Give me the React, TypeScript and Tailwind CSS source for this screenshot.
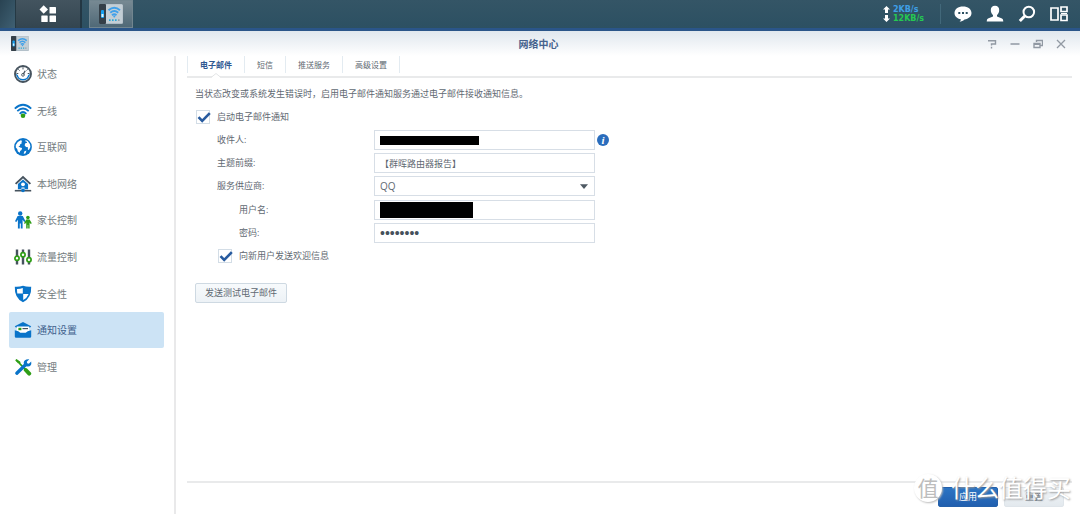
import React, { useState } from 'react';

const BLUE = '#0a74c9';
const GREEN = '#2f9e16';
const DARK = '#46535e';

function Svg({ children, className = 'h-[18px] w-[18px]', box = '0 0 18 18' }: { children: React.ReactNode; className?: string; box?: string }) {
  return (
    <svg viewBox={box} className={className + ' shrink-0'} fill="none" aria-hidden="true">
      {children}
    </svg>
  );
}

function RouterIcon({ className }: { className: string }) {
  return (
    <svg viewBox="0 0 24 20" className={className} fill="none" aria-hidden="true">
      <rect x="0" y="0" width="24" height="20" rx="1.5" fill="#aebbc4" />
      <rect x="7" y="0.5" width="16.5" height="18.5" rx="1" fill="#c3ced5" />
      <rect x="0" y="0" width="7" height="20" rx="1" fill="#343f48" />
      <rect x="2" y="6" width="3" height="8" rx="1" fill="#16a0f0" />
      <rect x="2.5" y="10" width="2" height="3" fill="#d9f5ff" />
      <path d="M9.5 6.2Q15.3 1.2 21 6.2M11.3 8.8Q15.3 5.300 19.2 8.800M13 11.200Q15.3 9.200 17.5 11.200" stroke="#3fa0ea" strokeWidth="1.900" />
      <circle cx="15.3" cy="12.600" r="1" fill="#3fa0ea" />
      <path d="M10 16.200h1.600M13 16.200h1.600M16 16.200h1.600" stroke="#2aa7d8" strokeWidth="1.800" />
      <path d="M19 16.200h1.600" stroke="#8f9ca4" strokeWidth="1.800" />
    </svg>
  );
}

const icons = {
  status: (
    <Svg>
      <circle cx="9" cy="9" r="8" fill="#fff" stroke={DARK} strokeWidth="1.9" />
      <path d="M2 8.500a7 7 0 0 0 14 0l-1.900 1.700A5.300 5.300 0 0 1 3.900 10.200Z" fill={BLUE} />
      <path d="M9 2.200v2.200M4.300 4.300l1.300 1.300M13.700 4.300l-1.100 1.200M2.500 8.500h1.800M13.700 8.500h1.800" stroke={DARK} strokeWidth="1" />
      <path d="M11.200 5.800 9.200 9.400" stroke={DARK} strokeWidth="1.300" />
      <circle cx="9" cy="9.800" r="1.400" stroke={DARK} strokeWidth="0.900" />
    </Svg>
  ),
  wifi: (
    <Svg>
      <path d="M.8 6.600Q9 -1 17.200 6.600M3.300 9.200Q9 3.800 14.700 9.200M5.700 11.800Q9 8.200 12.300 11.800" stroke={BLUE} strokeWidth="1.800" />
      <circle cx="9" cy="13.800" r="2.300" fill={GREEN} />
    </Svg>
  ),
  globe: (
    <Svg>
      <circle cx="9" cy="9" r="8.900" fill={BLUE} />
      <path d="M1.800 7 3.800 3.900l3-1.700 1.400.7-1 1.300.9.900-1.900 1.100-.3 1.500-1.500.5 1.700 1.200 2 .6-.6 1.900-1.400 1-.2 1.900-2-1.400-.7-2.500-1.400-1.500Z" fill="#fff" />
      <path d="m11.500 2 2.200 1 2.300 3.200.4 2.700-1.500 3.200-1.100-.7.200-2.200-2-.2-1.400-1.700.7-2.100 1.800-.5-.3-1-1.300-.2Z" fill="#fff" />
      <path d="m10.200 13.400 2.200-.8-.8 2.600-1.900.8Z" fill="#fff" />
    </Svg>
  ),
  home: (
    <Svg>
      <path d="M1.600 8.900 9 2.100l7.400 6.800" stroke={DARK} strokeWidth="1.900" />
      <path d="M9 4.500 3.900 9.100v5.200h10.200V9.100Z" fill={BLUE} />
      <circle cx="9" cy="9.300" r="1.900" fill="#fff" />
      <path d="M7.500 12.500h3v1.600h-3Z" fill="#fff" />
      <path d="M.8 15.700h16.400" stroke={DARK} strokeWidth="1.600" />
      <circle cx="9" cy="15.400" r="1.800" fill={BLUE} />
    </Svg>
  ),
  family: (
    <Svg>
      <circle cx="6.2" cy="2.500" r="2.200" fill={BLUE} />
      <path d="M3.600 4.900h5.200l2.700 5.400-1.300.8-1.600-2.300v8.700H6.800v-5h-1v5H3.900V8.800L2.300 11.100 1 10.300Z" fill={BLUE} />
      <circle cx="13.900" cy="6.600" r="1.800" fill={GREEN} />
      <path d="M12.200 8.600h3.400l2.200 3.700-1.100.7-1.100-1.600v6.100H14.200v-3.600h-.5v3.600h-1.500v-6.100L11 13l-1-.7Z" fill={GREEN} />
    </Svg>
  ),
  sliders: (
    <Svg>
      <path d="M3 1.500v15M9 1.500v15M15 1.500v15" stroke={DARK} strokeWidth="2.400" />
      <circle cx="3" cy="10.300" r="2.100" fill="#fff" stroke={GREEN} strokeWidth="1.700" />
      <circle cx="9" cy="6.800" r="2.100" fill="#fff" stroke={GREEN} strokeWidth="1.700" />
      <circle cx="15" cy="11.800" r="2.100" fill="#fff" stroke={GREEN} strokeWidth="1.700" />
    </Svg>
  ),
  shield: (
    <Svg>
      <path d="M9 .8Q13 2.100 17.200 1.700q.5 11.200-8.200 15.600Q.3 12.900.8 1.700 5 2.100 9 .8Z" fill={BLUE} />
      <path d="M8.800 3v5.600H3.300Q3 6.300 3 4 6 4.100 8.800 3ZM9.200 8.900h5.400Q13 13 9.200 15.100Z" fill="#fff" />
    </Svg>
  ),
  mail: (
    <Svg>
      <path d="M.8 5.300 9 1l8.200 4.300-1 1.100H1.800Z" fill={BLUE} />
      <path d="M2.800 5.400h12.400v5.200L9 13.200l-6.200-2.600Z" fill="#fff" />
      <path d="M.8 9.300q4.200.8 5.500 2.400h5.400q1.300-1.600 5.500-2.400v6.200q0 1.300-1.300 1.300H2.100Q.8 16.800.8 15.500Z" fill={BLUE} />
      <path d="M4.400 8h3" stroke={GREEN} strokeWidth="2.400" />
      <path d="M8.500 7.600h5.500" stroke={DARK} strokeWidth="1.200" />
    </Svg>
  ),
  tools: (
    <Svg>
      <path d="m2.200 2.200 3.300 2.200.4 1.500 6 6" stroke={GREEN} strokeWidth="1.700" />
      <path d="m1.200 2.300 1.300-1.300 3.700 3-1.800 1.800Z" fill={GREEN} />
      <path d="m11.800 12 3.400 3.600" stroke={GREEN} strokeWidth="4" strokeLinecap="round" />
      <path d="m2.800 15.200 8.700-8.500" stroke={BLUE} strokeWidth="3.300" strokeLinecap="round" />
      <path d="M15.300 1.300 12.800 3.800l.4 1.500 1.600.4 2.400-2.300q.8 5-3.500 5.100-4 0-4-3.700.4-4 5.600-3.500Z" fill={BLUE} />
    </Svg>
  ),
};

const navItems: { label: string; icon: React.ReactNode }[] = [
  { label: '状态', icon: icons.status },
  { label: '无线', icon: icons.wifi },
  { label: '互联网', icon: icons.globe },
  { label: '本地网络', icon: icons.home },
  { label: '家长控制', icon: icons.family },
  { label: '流量控制', icon: icons.sliders },
  { label: '安全性', icon: icons.shield },
  { label: '通知设置', icon: icons.mail },
  { label: '管理', icon: icons.tools },
];

const tabs = ['电子邮件', '短信', '推送服务', '高级设置'];

function TaskBar() {
  return (
    <header className="flex h-[31px] shrink-0 items-stretch border-b-[3px] border-[#2a5589] bg-linear-to-b from-[#345566] to-[#2c5062]">
      <div className="w-4 border-r border-[#253944] bg-linear-to-br from-[#294352] to-[#3f6073]" />
      <button aria-label="主菜单" className="flex w-[66px] items-center justify-center border-r-2 border-[#233743] bg-linear-to-b from-[#43545f] to-[#334550]">
        <Svg>
          <path d="m4.700.3 4.300 4.200-4.300 4.200L.5 4.500Z" fill="#fff" />
          <rect x="10.500" y="2" width="6.500" height="6.500" rx=".6" fill="#fff" />
          <rect x="2.300" y="10.500" width="6.400" height="6.500" rx=".6" fill="#fff" />
          <rect x="10.500" y="10.500" width="6.500" height="6.500" rx=".6" fill="#fff" />
        </Svg>
      </button>
      <button aria-label="打开网络中心" className="ml-[7px] flex w-11 items-center justify-center border border-[#71858f] bg-linear-to-b from-[#778993] to-[#506977]">
        <RouterIcon className="h-5 w-6" />
      </button>
      <div className="ml-auto flex items-center">
        <div className="flex w-[57px] items-center gap-[3px]">
          <Svg className="h-4 w-[7px]" box="0 0 7 16">
            <path d="M3.500 0 7 3.500H5V7H2V3.500H0ZM3.500 16 0 12.500h2V9h3v3.500h2Z" fill="#fff" />
          </Svg>
          <div className="font-['DejaVu_Sans',sans-serif] text-[8px] leading-[9px] font-bold">
            <div className="text-[#3f9fe5]">2KB/s</div>
            <div className="text-[#25c852]">12KB/s</div>
          </div>
        </div>
        <div className="h-5 w-px bg-[#42687a]" />
        <div className="flex items-center gap-[14px] pr-3 pl-[13px]">
          <button aria-label="消息">
            <Svg>
              <path d="M9 1.500c5 0 8.500 2.700 8.500 6.500 0 3.400-3 6-7 6.500-1.500 1.500-3 2-5 2.200 1-.8 1.500-1.700 1.300-2.500C3 13.600.5 11.200.5 8 .5 4.200 4 1.500 9 1.500Z" fill="#fff" />
              <path d="M4.300 8h2M8 8h2M11.700 8h2" stroke="#2c5061" strokeWidth="2" />
            </Svg>
          </button>
          <button aria-label="用户">
            <Svg>
              <path d="M9 .8c2.800 0 4.200 1.700 4.200 4.300 0 2.300-1 4.100-2.200 5v1.300l5 2q1.300.6 1.300 3.100H.7q0-2.500 1.300-3.100l5-2v-1.300c-1.200-.9-2.200-2.700-2.200-5C4.800 2.500 6.200.8 9 .8Z" fill="#fff" />
            </Svg>
          </button>
          <button aria-label="搜索">
            <Svg>
              <circle cx="10.800" cy="7" r="5.300" stroke="#fff" strokeWidth="2" />
              <path d="m6.800 11-5 5" stroke="#fff" strokeWidth="3" />
            </Svg>
          </button>
          <button aria-label="小组件">
            <Svg>
              <path d="M1 3h7v12H1ZM11 2h6v4.500h-6ZM11 10h6v5.500h-6Z" stroke="#fff" strokeWidth="1.700" />
              <path d="M11 8.500h6" stroke="#fff" strokeWidth="1" />
            </Svg>
          </button>
        </div>
      </div>
    </header>
  );
}

function Check({ label }: { label: string }) {
  return (
    <label className="flex items-center gap-[7px]">
      <span className="relative h-[14px] w-[14px]">
        <input type="checkbox" defaultChecked className="peer block h-[14px] w-[14px] appearance-none border border-[#d3dde6] bg-white" />
        <svg viewBox="0 0 14 14" className="pointer-events-none absolute inset-0 hidden overflow-visible peer-checked:block" fill="none" aria-hidden="true">
          <path d="m2.500 7.200 3.700 3.800L13.800 3.200" stroke="#285b9f" strokeWidth="2.600" />
        </svg>
      </span>
      {label}
    </label>
  );
}

const field = 'block h-5 w-full border border-[#d7dee6] bg-white px-[5px] outline-none focus:border-[#6d9bd1]';

function Row({ id, label, nested, children }: { id: string; label: string; nested?: boolean; children: React.ReactNode }) {
  return (
    <div className="flex items-center">
      <label htmlFor={id} className={'w-[157px] shrink-0 ' + (nested ? 'pl-[22px]' : '')}>
        {label}
      </label>
      <div className="relative w-[221px]">{children}</div>
    </div>
  );
}

function WindowControls() {
  return (
    <div className="flex items-center gap-[13px] text-[#9199a3]">
      <button aria-label="帮助">
        <Svg className="h-[10px] w-[10px]" box="0 0 10 10">
          <path d="M1 1.800h7.500V5H4.500v1.500M4.500 7.800v1.700" stroke="currentColor" strokeWidth="1.400" />
        </Svg>
      </button>
      <button aria-label="最小化">
        <Svg className="h-[10px] w-[10px]" box="0 0 10 10">
          <path d="M.5 5h9" stroke="currentColor" strokeWidth="1.500" />
        </Svg>
      </button>
      <button aria-label="还原">
        <Svg className="h-[10px] w-[10px]" box="0 0 10 10">
          <path d="M3.500 3V1.500h6v5H7.500M3 1.500h6.500M1 4.500h6v4H1ZM1 5.200h6" stroke="currentColor" strokeWidth="1.400" />
        </Svg>
      </button>
      <button aria-label="关闭">
        <Svg className="h-[10px] w-[10px]" box="0 0 10 10">
          <path d="m1 1 8 8M9 1 1 9" stroke="currentColor" strokeWidth="1.300" />
        </Svg>
      </button>
    </div>
  );
}

export default function App() {
  const [active, setActive] = useState('通知设置');
  const [tab, setTab] = useState('电子邮件');

  return (
    <div className="relative flex min-h-screen flex-col overflow-hidden bg-white font-['Open_Sans','Noto_Sans_CJK_SC',sans-serif] text-[9px] leading-[14px] text-[#5f6972]" lang="zh-CN">
      <TaskBar />
      <div className="flex h-[25px] shrink-0 items-center bg-linear-to-b from-[#e0e7ee] to-white pr-[14px] pl-[11px]">
        <div className="flex-1">
          <RouterIcon className="h-[15px] w-[18px]" />
        </div>
        <h1 className="text-[10px] font-semibold text-[#45628d]">网络中心</h1>
        <div className="flex flex-1 justify-end">
          <WindowControls />
        </div>
      </div>

      <div className="flex flex-1">
        <nav className="w-[174px] shrink-0 pr-[10px] pl-[9px]">
          <ul className="grid h-[329px] grid-rows-9">
            {navItems.map((item) => (
              <li key={item.label} className="flex">
                <button
                  onClick={() => setActive(item.label)}
                  className={
                    'flex w-full items-center gap-[5px] rounded-xs pl-[5px] text-[10px] ' +
                    (active === item.label ? 'bg-[#cce3f5] text-[#3f618c]' : 'text-[#737b7e]')
                  }
                >
                  {item.icon}
                  {item.label}
                </button>
              </li>
            ))}
          </ul>
        </nav>

        <main className="flex min-w-0 flex-1 flex-col border-l-2 border-[#e9e9ea] pr-2 pl-[11px]">
          <div role="tablist" className="flex h-[22px] items-start border-b-2 border-[#e9eaeb]">
            {tabs.map((name) => (
              <button
                key={name}
                role="tab"
                aria-selected={tab === name}
                onClick={() => setTab(name)}
                className={
                  'relative h-[17px] border-r border-[#e3ebf1] px-3 text-[8px] first:border-l ' +
                  (tab === name ? 'font-bold text-[#305891]' : '')
                }
              >
                {name}
                {tab === name && (
                  <svg viewBox="0 0 10 6" className="absolute top-[17px] left-1/2 h-[6px] w-[10px] -translate-x-1/2" aria-hidden="true">
                    <path d="M0 5 5 0l5 5v1H0Z" fill="#fff" />
                    <path d="M0 4.500 5 .5l5 4" stroke="#e3e5e7" fill="none" />
                  </svg>
                )}
              </button>
            ))}
          </div>

          <form className="flex flex-1 flex-col" onSubmit={(e) => e.preventDefault()}>
            <div className="flex-1 pt-[9px] pl-2">
              <p>当状态改变或系统发生错误时，启用电子邮件通知服务通过电子邮件接收通知信息。</p>
              <div className="mt-[9px] pl-px">
                <Check label="启动电子邮件通知" />
              </div>
              <div className="mt-1 grid h-[117px] grid-rows-5 pl-[22px]">
                <Row id="to" label="收件人:">
                  <input id="to" className={field} />
                  <span className="pointer-events-none absolute top-1.5 left-1.5 h-[9px] w-[99px] bg-black" />
                  <button type="button" aria-label="说明" className="absolute top-1 left-[223px] h-3 w-3 rounded-full bg-[#2a6dbd] text-center font-['Liberation_Serif',serif] text-[11px] leading-3 font-bold text-white italic">
                    i
                  </button>
                </Row>
                <Row id="prefix" label="主题前缀:">
                  <input id="prefix" defaultValue="【群晖路由器报告】" className={field} />
                </Row>
                <Row id="provider" label="服务供应商:">
                  <select id="provider" className={field + ' appearance-none text-[10px]'}>
                    <option>QQ</option>
                  </select>
                  <svg viewBox="0 0 8 5" className="pointer-events-none absolute top-2 right-[7px] h-[5px] w-2" aria-hidden="true">
                    <path d="M0 .3h8L4 5Z" fill="#4e5963" />
                  </svg>
                </Row>
                <Row id="user" label="用户名:" nested>
                  <input id="user" className={field} />
                  <span className="pointer-events-none absolute top-0.5 left-1.5 h-4 w-[93px] bg-black" />
                </Row>
                <Row id="password" label="密码:" nested>
                  <input id="password" type="password" defaultValue="password" className={field + " font-['Liberation_Sans',sans-serif] text-[14px] text-[#46515c]"} />
                </Row>
              </div>
              <div className="mt-1 pl-[23px]">
                <Check label="向新用户发送欢迎信息" />
              </div>
              <button type="button" className="mt-5 h-5 rounded-xs border border-[#ced9e2] bg-linear-to-b from-[#f7fafc] to-[#edf2f6] px-[9px]">
                发送测试电子邮件
              </button>
            </div>
            <div className="flex h-[33px] items-start justify-end gap-[6px] border-t-2 border-[#e9eaeb] pt-1 pr-2">
              <button className="h-5 w-[60px] rounded-xs border border-[#2460aa] bg-linear-to-b from-[#2b74c4] to-[#215faf] text-white">应用</button>
              <button type="reset" className="h-5 w-[60px] rounded-xs border border-[#dfe5ea] bg-linear-to-b from-[#f1f5f8] to-[#e3e9ee]">重置</button>
            </div>
          </form>
        </main>
      </div>

      <div className="pointer-events-none absolute right-[9px] bottom-[10px] flex items-center gap-[9px] text-[24px] leading-8 text-white">
        <span className="flex h-7 w-7 items-center justify-center rounded-full bg-white text-[21px] text-[#bdbdbd] shadow-[1px_1px_2px_#bbbbbb]">值</span>
        <span className="text-shadow-[1px_1px_2px_#999999]">什么值得买</span>
      </div>
    </div>
  );
}
